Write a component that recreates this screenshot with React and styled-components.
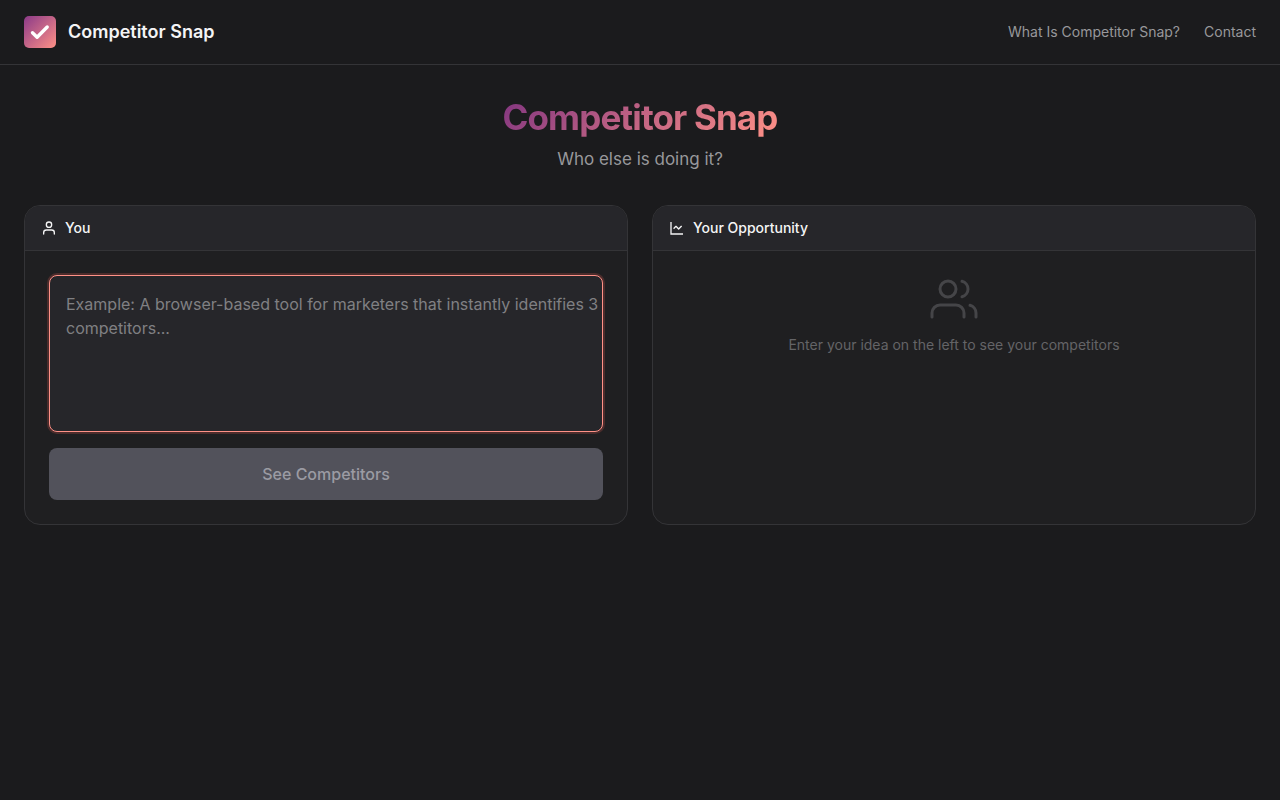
import React, { useState } from 'react';
import styled, { createGlobalStyle } from 'styled-components';

const App = () => {
	const [idea, setIdea] = useState('');

	return (
		<>
		<GlobalStyle />
		<Header>
			<Brand href="#">
				<Logo />
				<BrandName>Competitor Snap</BrandName>
			</Brand>
			<Nav>
				<NavLink href="#about">What Is Competitor Snap?</NavLink>
				<NavLink href="#contact">Contact</NavLink>
			</Nav>
		</Header>
		<Main>
			<Hero>
				<Title>Competitor Snap</Title>
				<Subtitle>Who else is doing it?</Subtitle>
			</Hero>
			<Panels>
				<Panel>
					<PanelHeader>
						<UserIcon />
						<PanelTitle as="label" htmlFor="idea">You</PanelTitle>
					</PanelHeader>
					<Form onSubmit={(e) => e.preventDefault()}>
						<IdeaInput
							id="idea"
							value={idea}
							onChange={(e) => setIdea(e.target.value)}
							placeholder="Example: A browser-based tool for marketers that instantly identifies 3 competitors..."
						/>
						<SubmitButton type="submit" disabled={!idea.trim()}>See Competitors</SubmitButton>
					</Form>
				</Panel>
				<Panel>
					<PanelHeader>
						<ChartIcon />
						<PanelTitle>Your Opportunity</PanelTitle>
					</PanelHeader>
					<EmptyState>
						<UsersIcon />
						<EmptyText>Enter your idea on the left to see your competitors</EmptyText>
					</EmptyState>
				</Panel>
			</Panels>
		</Main>
		</>
	)
}

const Logo = () => (
	<svg width="32" height="32" viewBox="0 0 32 32" fill="none" aria-hidden="true">
		<defs>
			<linearGradient id="logo" x1="0" y1="0" x2="32" y2="32" gradientUnits="userSpaceOnUse">
				<stop stopColor="#8b3a88" />
				<stop offset="1" stopColor="#ff9187" />
			</linearGradient>
		</defs>
		<rect width="32" height="32" rx="5" fill="url(#logo)" />
		<path d="M8.5 16.8l4.6 4.4L23.2 11" stroke="#fff" strokeWidth="3.4" strokeLinecap="round" strokeLinejoin="round" />
	</svg>
)

const UserIcon = () => (
	<Icon viewBox="0 0 24 24" aria-hidden="true">
		<path d="M20 21v-2a4 4 0 0 0-4-4H8a4 4 0 0 0-4 4v2" />
		<circle cx="12" cy="7" r="4" />
	</Icon>
)

const ChartIcon = () => (
	<Icon viewBox="0 0 24 24" aria-hidden="true">
		<path d="M3 3v18h18" strokeLinecap="butt" strokeLinejoin="miter" />
		<path d="M7.5 12.5l3-3 4 4 4-4" />
	</Icon>
)

const UsersIcon = () => (
	<LargeIcon viewBox="0 0 24 24" aria-hidden="true">
		<path d="M17 21v-2a4 4 0 0 0-4-4H5a4 4 0 0 0-4 4v2" />
		<circle cx="9" cy="7" r="4" />
		<path d="M23 21v-2a4 4 0 0 0-3-3.87" />
		<path d="M16 3.13a4 4 0 0 1 0 7.75" />
	</LargeIcon>
)

const GlobalStyle = createGlobalStyle`
	* {
		box-sizing: border-box;
		margin: 0;
	}
	body {
		background: #1b1b1d;
		color: #f4f4f5;
		font-family: Inter, sans-serif;
		font-size: 16px;
		line-height: 24px;
		-webkit-font-smoothing: antialiased;
	}
`
const Header = styled.header`
	display: flex;
	align-items: center;
	justify-content: space-between;
	padding: 16px 24px;
	border-bottom: 1px solid #343437;
`
const Brand = styled.a`
	display: flex;
	align-items: center;
	gap: 12px;
	color: inherit;
	text-decoration: none;
`
const BrandName = styled.span`
	font-size: 18px;
	font-weight: 600;
`
const Nav = styled.nav`
	display: flex;
	gap: 24px;
`
const NavLink = styled.a`
	color: #98989b;
	font-size: 14px;
	text-decoration: none;
	&:hover {
		color: #f4f4f5;
	}
`
const Main = styled.main`
	padding: 32px 24px;
`
const Hero = styled.div`
	display: flex;
	flex-direction: column;
	align-items: center;
	gap: 8px;
	margin-bottom: 32px;
	text-align: center;
`
const Title = styled.h1`
	font-size: 35px;
	font-weight: 700;
	line-height: 40px;
	letter-spacing: -0.025em;
	background: linear-gradient(135deg, #833680, #ff9187);
	-webkit-background-clip: text;
	background-clip: text;
	color: transparent;
`
const Subtitle = styled.p`
	color: #98989b;
	font-size: 17px;
	line-height: 28px;
`
const Panels = styled.div`
	display: grid;
	grid-template-columns: 1fr 1fr;
	gap: 24px;
	@media(max-width:768px){
		grid-template-columns: 1fr;
	}
`
const Panel = styled.section`
	display: flex;
	flex-direction: column;
	min-height: 320px;
	background: #1f1f21;
	border: 1px solid #343437;
	border-radius: 16px;
	overflow: hidden;
`
const PanelHeader = styled.div`
	display: flex;
	align-items: center;
	gap: 8px;
	padding: 12px 16px;
	background: #26262a;
	border-bottom: 1px solid #343437;
`
const PanelTitle = styled.h2`
	font-size: 14px;
	font-weight: 500;
	line-height: 20px;
`
const Form = styled.form`
	display: flex;
	flex: 1;
	flex-direction: column;
	gap: 16px;
	padding: 24px;
`
const IdeaInput = styled.textarea`
	flex: 1;
	width: 100%;
	padding: 16px 0 16px 16px;
	background: #26262a;
	border: 1px solid #ff9187;
	border-radius: 8px;
	outline: none;
	box-shadow: 0 0 0 2px rgba(255, 100, 90, 0.2);
	color: #f4f4f5;
	font: inherit;
	resize: none;
	&::placeholder {
		color: #808083;
	}
`
const SubmitButton = styled.button`
	padding: 14px 24px;
	background: #833680;
	border: none;
	border-radius: 8px;
	color: #fff;
	font: inherit;
	font-weight: 500;
	cursor: pointer;
	&:disabled {
		background: #52525b;
		color: #9b9ba3;
		cursor: not-allowed;
	}
`
const EmptyState = styled.div`
	display: flex;
	flex-direction: column;
	align-items: center;
	gap: 12px;
	padding: 24px;
`
const EmptyText = styled.p`
	color: #646467;
	font-size: 14px;
	line-height: 20px;
`
const Icon = styled.svg`
	width: 16px;
	height: 16px;
	fill: none;
	stroke: currentColor;
	stroke-width: 2;
	stroke-linecap: round;
	stroke-linejoin: round;
`
const LargeIcon = styled(Icon)`
	width: 48px;
	height: 48px;
	color: #454548;
	stroke-width: 1.5;
`
export default App
